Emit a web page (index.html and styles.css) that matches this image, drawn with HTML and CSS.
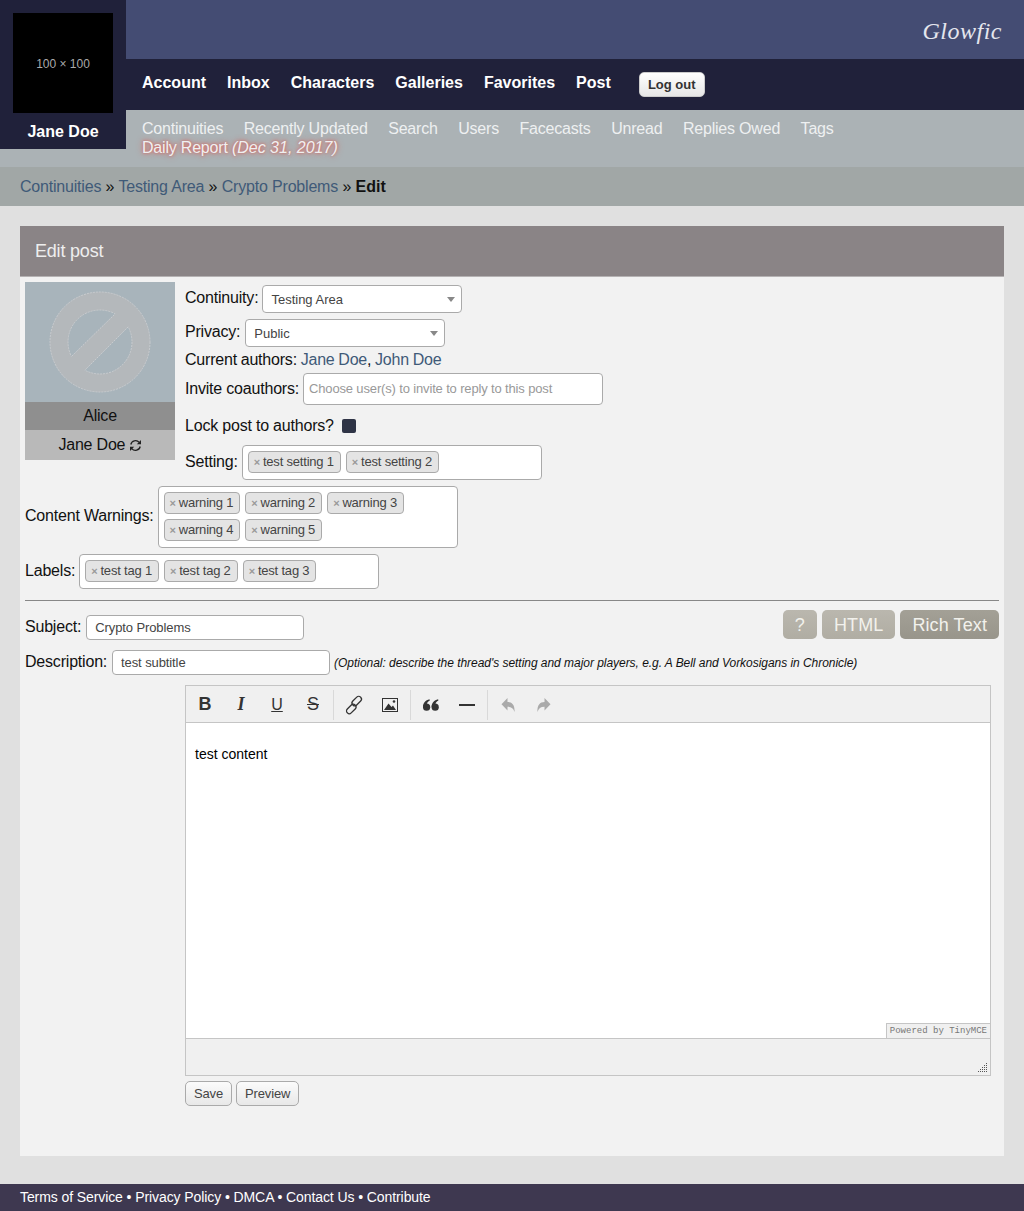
FILE: index.html
```html
<!DOCTYPE html>
<html lang="en">
<head>
    <link rel="stylesheet" href="styles.css">
    <meta charset="UTF-8">
    <title>Edit post | Glowfic</title>
</head>
<body>
    <header>
        <div class="user-box">
            <div class="user-icon">100 × 100</div>
            <div class="user-name">Jane Doe</div>
        </div>
        <div class="logo-bar"><span class="logo">Glowfic</span></div>
        <nav class="main-nav">
            <a href="#">Account</a>
            <a href="#">Inbox</a>
            <a href="#">Characters</a>
            <a href="#">Galleries</a>
            <a href="#">Favorites</a>
            <a href="#">Post</a>
            <button class="logout-button">Log out</button>
        </nav>
        <nav class="sub-nav">
            <div class="sub-links">
                <a href="#">Continuities</a>
                <a href="#">Recently Updated</a>
                <a href="#">Search</a>
                <a href="#">Users</a>
                <a href="#">Facecasts</a>
                <a href="#">Unread</a>
                <a href="#">Replies Owed</a>
                <a href="#">Tags</a>
            </div>
            <a href="#" class="daily-report">Daily Report <em>(Dec 31, 2017)</em></a>
        </nav>
    </header>

    <div class="breadcrumbs">
        <a href="#">Continuities</a> » <a href="#">Testing Area</a> » <a href="#">Crypto Problems</a> » <b>Edit</b>
    </div>

    <main>
        <h2 class="panel-title">Edit post</h2>
        <form class="panel">
            <div class="post-top">
                <div class="character-box">
                    <div class="character-icon">
                        <svg width="150" height="120" viewBox="0 0 150 120">
                            <circle cx="75" cy="60" r="41" fill="none" stroke="#b4b8bb" stroke-width="18"/>
                            <circle cx="75" cy="60" r="32" fill="none" stroke="#c9cccf" stroke-width="1" stroke-dasharray="2 1"/>
                            <path d="M41 80 L96 26 L109 39 L54 94 Z" fill="#b4b8bb"/>
                            <circle cx="75" cy="60" r="50" fill="none" stroke="#c9cccf" stroke-width="1" stroke-dasharray="2 1"/>
                            <path d="M47 74 L90 32 M103 45 L60 88" stroke="#c9cccf" stroke-width="1" stroke-dasharray="2 1"/>
                        </svg>
                    </div>
                    <div class="character-name">Alice</div>
                    <div class="character-user">
                        Jane Doe
                        <svg class="swap-icon" width="13" height="13" viewBox="0 0 13 13">
                            <path d="M1.8 5.5 A4.8 4.8 0 0 1 10.2 3.4 M11.2 7.5 A4.8 4.8 0 0 1 2.8 9.6" fill="none" stroke="#222" stroke-width="1.3"/>
                            <path d="M12 1 V5.2 H7.8 Z M1 12 V7.8 H5.2 Z" fill="#222"/>
                        </svg>
                    </div>
                </div>

                <div class="post-fields">
                    <div class="field field-select">
                        <label class="field-label">Continuity:</label>
                        <span class="select-box">Testing Area</span>
                    </div>
                    <div class="field field-select">
                        <label class="field-label">Privacy:</label>
                        <span class="select-box">Public</span>
                    </div>
                    <div class="authors">Current authors: <a href="#">Jane Doe</a>, <a href="#">John Doe</a></div>
                    <div class="field field-invite">
                        <label class="field-label">Invite coauthors:</label>
                        <span class="invite-box">Choose user(s) to invite to reply to this post</span>
                    </div>
                    <div class="field field-lock">
                        <label>Lock post to authors?</label>
                        <span class="lock-check"></span>
                    </div>
                    <div class="field">
                        <label class="field-label">Setting:</label>
                        <div class="tag-box">
                            <span class="tag">test setting 1</span>
                            <span class="tag">test setting 2</span>
                        </div>
                    </div>
                </div>
            </div>

            <div class="field field-warnings">
                <label class="field-label">Content Warnings:</label>
                <div class="tag-box">
                    <span class="tag">warning 1</span>
                    <span class="tag">warning 2</span>
                    <span class="tag">warning 3</span>
                    <span class="tag">warning 4</span>
                    <span class="tag">warning 5</span>
                </div>
            </div>
            <div class="field field-labels">
                <label class="field-label">Labels:</label>
                <div class="tag-box">
                    <span class="tag">test tag 1</span>
                    <span class="tag">test tag 2</span>
                    <span class="tag">test tag 3</span>
                </div>
            </div>

            <hr class="divider">

            <div class="subject-row">
                <div class="field">
                    <label class="field-label">Subject:</label>
                    <input type="text" class="text-input" value="Crypto Problems">
                </div>
                <div class="editor-modes">
                    <span class="mode-button mode-help">?</span>
                    <span class="mode-button">HTML</span>
                    <span class="mode-button mode-active">Rich Text</span>
                </div>
            </div>
            <div class="field field-description">
                <label class="field-label">Description:</label>
                <input type="text" class="text-input" value="test subtitle">
                <span class="hint">(Optional: describe the thread's setting and major players, e.g. A Bell and Vorkosigans in Chronicle)</span>
            </div>

            <div class="editor">
                <div class="toolbar">
                    <div class="tool-group">
                        <span class="tool tool-bold">B</span>
                        <span class="tool tool-italic">I</span>
                        <span class="tool tool-underline">U</span>
                        <span class="tool tool-strike">S</span>
                    </div>
                    <div class="tool-group">
                        <span class="tool">
                            <svg width="20" height="20" viewBox="0 0 20 20" fill="none" stroke="#333" stroke-width="1.3">
                                <rect x="10" y="0.5" width="5.5" height="11" rx="2.7" transform="rotate(45 12.7 6)"/>
                                <rect x="4.5" y="8.5" width="5.5" height="11" rx="2.7" transform="rotate(45 7.3 14)"/>
                            </svg>
                        </span>
                        <span class="tool">
                            <svg width="16" height="14" viewBox="0 0 16 14">
                                <rect x="0.5" y="0.5" width="15" height="13" fill="none" stroke="#333"/>
                                <path d="M2 12 L6.5 5.5 L9.5 9 L11 7.5 L14 12 Z" fill="#333"/>
                                <circle cx="12" cy="3.5" r="1.3" fill="#333"/>
                            </svg>
                        </span>
                    </div>
                    <div class="tool-group">
                        <span class="tool">
                            <svg width="16" height="12" viewBox="0 0 16 12" fill="#333">
                                <circle cx="3.6" cy="8.2" r="3.6"/>
                                <path d="M0 8 C0 4 2.5 1 6.5 0.2 L6.8 1.6 C4.5 2.6 3.4 4.5 3.6 7 Z"/>
                                <circle cx="12.2" cy="8.2" r="3.6"/>
                                <path d="M8.6 8 C8.6 4 11.1 1 15.1 0.2 L15.4 1.6 C13.1 2.6 12 4.5 12.2 7 Z"/>
                            </svg>
                        </span>
                        <span class="tool"><span class="tool-rule"></span></span>
                    </div>
                    <div class="tool-group tool-group-last">
                        <span class="tool">
                            <svg width="14" height="16" viewBox="0 0 14 16" fill="#aaa">
                                <path d="M6.5 1 V5 C11 5 14 8 13.5 15 C12.5 11.5 10.5 9.8 6.5 9.8 V13.5 L0.5 7.2 Z"/>
                            </svg>
                        </span>
                        <span class="tool">
                            <svg width="14" height="16" viewBox="0 0 14 16" fill="#aaa">
                                <path d="M7.5 1 V5 C3 5 0 8 0.5 15 C1.5 11.5 3.5 9.8 7.5 9.8 V13.5 L13.5 7.2 Z"/>
                            </svg>
                        </span>
                    </div>
                </div>
                <div class="editor-body">
                    <p>test content</p>
                    <span class="powered-by">Powered by TinyMCE</span>
                </div>
                <div class="status-bar">
                    <svg class="resize-grip" width="10" height="10" viewBox="0 0 10 10" fill="#555">
                        <path d="M8 0h1v1H8zM6 2h1v1H6zM8 2h1v1H8zM4 4h1v1H4zM6 4h1v1H6zM8 4h1v1H8zM2 6h1v1H2zM4 6h1v1H4zM6 6h1v1H6zM8 6h1v1H8zM0 8h1v1H0zM2 8h1v1H2zM4 8h1v1H4zM6 8h1v1H6zM8 8h1v1H8z"/>
                    </svg>
                </div>
            </div>

            <div class="form-buttons">
                <button type="button" class="plain-button">Save</button>
                <button type="button" class="plain-button">Preview</button>
            </div>
        </form>
    </main>

    <footer>
        <a href="#">Terms of Service</a> • <a href="#">Privacy Policy</a> • <a href="#">DMCA</a> • <a href="#">Contact Us</a> • <a href="#">Contribute</a>
    </footer>
</body>
</html>
```

FILE: styles.css
```css
body {
    font-family: 'Liberation Sans', Arial, sans-serif;
    font-size: 16px;
    letter-spacing: -0.2px; /* body text runs a bit tighter */
    margin: 0;
    background-color: #e0e0e0;
    color: #111;
}

a {
    text-decoration: none;
    color: #3f5a78;
}

/* Header */
header {
    position: relative;
}

.user-box {
    position: absolute;
    left: 0;
    top: 0;
    width: 126px;
    height: 149px;
    background-color: #20213a;
}

.user-icon {
    width: 100px;
    height: 100px;
    margin: 13px 13px 0;
    background-color: #000;
    color: #aaa;
    font-size: 12px;
    letter-spacing: 0;
    line-height: 102px;
    text-align: center;
}

.user-name {
    color: #fff;
    font-weight: bold;
    letter-spacing: 0;
    text-align: center;
    margin-top: 9px;
    line-height: 19px;
}

.logo-bar {
    box-sizing: border-box;
    height: 59px;
    padding: 3px 22px 0 0;
    background-color: #444c73;
    display: flex;
    justify-content: flex-end;
    align-items: center;
}

.logo {
    font-family: 'Liberation Serif', serif;
    font-style: italic;
    font-size: 24px;
    letter-spacing: 0.5px;
    color: #e4e6ee;
}

.main-nav {
    height: 51px;
    background-color: #20213a;
    padding-left: 142px;
    display: flex;
    align-items: center;
    gap: 21px;
}

.main-nav a {
    color: #fff;
    font-weight: bold;
    letter-spacing: 0;
    margin-top: -3px;
}

.logout-button {
    margin-left: 7px;
    width: 66px;
    height: 25px;
    padding: 0;
    border: 1px solid #ccc;
    border-radius: 5px;
    background: linear-gradient(#fff, #e6e6e6);
    color: #333;
    font-family: inherit;
    font-size: 13px;
    font-weight: bold;
}

.sub-nav {
    height: 48px;
    padding: 9px 0 0 142px;
    background-color: #abb2b5;
    line-height: 19px;
}

.sub-links {
    display: flex;
    gap: 20.5px;
}

.sub-nav a {
    color: #eef0f1;
}

.sub-nav .daily-report {
    text-shadow: 0 0 6px #d9625a, 0 0 3px #d9625a;
}

.daily-report em {
    letter-spacing: 0;
}

.breadcrumbs {
    height: 39px;
    line-height: 39px;
    padding-left: 20px;
    background-color: #a1a7a6;
    word-spacing: 0.15px;
}

.breadcrumbs b {
    letter-spacing: 0;
}

/* Main panel */
main {
    margin: 20px 20px 28px;
}

.panel-title {
    margin: 0;
    height: 50px;
    padding-left: 15px;
    line-height: 50px;
    font-size: 18px;
    font-weight: normal;
    color: #eee;
    background-color: #8a8486;
    border-bottom: 1px solid #b5b2b3;
}

.panel {
    padding: 5px 5px 50px;
    background-color: #f2f2f2;
}

.post-top {
    display: flex;
    gap: 10px;
}

.character-box {
    width: 150px;
    height: 178px;
    text-align: center;
}

.character-icon {
    height: 120px;
    background-color: #a8b4bb;
}

.character-name {
    height: 28px;
    line-height: 28px;
    background-color: #8f8f8f;
}

.character-user {
    height: 30px;
    line-height: 30px;
    background-color: #b9b9b9;
}

.swap-icon {
    margin-left: -1px;
    vertical-align: -2px;
}

/* Form rows */
.field {
    display: flex;
    align-items: center;
    gap: 4px;
}

.field-label {
    padding-bottom: 1px;
}

.field-select .field-label,
.field-warnings .field-label {
    padding-bottom: 3px;
}

.field-select {
    margin: 3px 0 6px;
}

.field-select + .field-select {
    margin-top: 0;
    margin-bottom: 4px;
    gap: 5px;
}

.select-box {
    position: relative;
    width: 190px;
    height: 26px;
    line-height: 28px;
    padding-left: 8px;
    background-color: #fff;
    border: 1px solid #aaa;
    border-radius: 4px;
    font-size: 13px;
    letter-spacing: 0;
    color: #444;
}

.select-box::after {
    content: "";
    position: absolute;
    right: 6px;
    top: 11px;
    border-style: solid;
    border-width: 5px 4px 0;
    border-color: #888 transparent transparent;
}

.authors {
    line-height: 18px;
    word-spacing: -0.5px;
    margin-bottom: 4px;
}

.invite-box {
    width: 293px;
    height: 30px;
    padding-left: 5px;
    line-height: 30px;
    background-color: #fff;
    border: 1px solid #aaa;
    border-radius: 4px;
    font-size: 13px;
    letter-spacing: -0.15px;
    color: #999;
}

.field-lock {
    gap: 8px;
    margin: 11px 0 9px;
    height: 20px;
}

.lock-check {
    width: 14px;
    height: 14px;
    background-color: #2f3446;
    border-radius: 2px;
}

.tag-box {
    display: flex;
    flex-wrap: wrap;
    align-content: flex-start;
    gap: 5px;
    width: 288px;
    min-height: 22px;
    padding: 5px 5px 6px;
    background-color: #fff;
    border: 1px solid #aaa;
    border-radius: 4px;
}

.tag {
    height: 20px;
    padding: 0 6px 0 5px;
    line-height: 20px;
    background-color: #e4e4e4;
    border: 1px solid #aaa;
    border-radius: 4px;
    font-size: 13px;
    letter-spacing: -0.2px;
    color: #444;
    white-space: nowrap;
}

.tag::before {
    content: "×";
    color: #999;
    font-weight: bold;
    font-size: 11px;
    margin-right: 3px;
}

.field-warnings {
    margin-top: 6px;
}

.field-labels {
    margin-top: 6px;
}

.divider {
    margin: 11px 0 9px;
    border: 0;
    border-top: 1px solid #888;
}

.subject-row {
    display: flex;
    justify-content: space-between;
    align-items: flex-start;
}

.subject-row .field {
    padding-top: 5px;
    gap: 5px;
}

.text-input {
    box-sizing: border-box;
    width: 218px;
    height: 25px;
    padding: 0 8px;
    background-color: #fff;
    border: 1px solid #aaa;
    border-radius: 4px;
    font-family: inherit;
    font-size: 13px;
    letter-spacing: -0.1px;
    color: #444;
}

.editor-modes {
    display: flex;
    gap: 5px;
}

.mode-button {
    height: 29px;
    padding: 0 12px;
    line-height: 30px;
    font-size: 18px;
    letter-spacing: 0.1px;
    color: #f2f1ec;
    background: linear-gradient(#bab7ae, #b0ada3);
    border-radius: 5px;
}

.mode-active {
    background: linear-gradient(#a3a096, #98958b);
}

.field-description {
    margin-top: 10px;
    gap: 5px;
}

.hint {
    margin-left: -1px;
    font-size: 12px;
    font-style: italic;
    letter-spacing: -0.04px;
}

/* Rich text editor */
.editor {
    box-sizing: border-box;
    width: 806px;
    margin: 10px 0 0 160px;
    border: 1px solid #c5c5c5;
}

.toolbar {
    display: flex;
    height: 35px;
    padding: 1px 0 0 1px;
    background-color: #f0f0f0;
    border-bottom: 1px solid #c5c5c5;
    align-items: center;
}

.tool-group {
    display: flex;
    height: 30px;
    padding-right: 2px;
    margin-right: 2px;
    border-right: 1px solid #d9d9d9;
}

.tool-group-last {
    border-right: 0;
}

.tool {
    width: 36px;
    height: 30px;
    display: flex;
    align-items: center;
    justify-content: center;
    font-size: 18px;
    letter-spacing: 0;
    color: #333;
}

.tool-bold {
    font-weight: bold;
}

.tool-italic {
    font-family: 'Liberation Serif', serif;
    font-style: italic;
    font-weight: bold;
}

.tool-underline {
    text-decoration: underline;
    font-size: 16px;
}

.tool-strike {
    text-decoration: line-through;
}

.tool-rule {
    width: 16px;
    height: 2px;
    background-color: #333;
}

.editor-body {
    position: relative;
    height: 315px;
    background-color: #fff;
}

.editor-body p {
    margin: 0;
    padding: 23px 0 0 9px;
    font-size: 14px;
    letter-spacing: 0;
    line-height: 17px;
    color: #000;
}

.powered-by {
    position: absolute;
    right: 0;
    bottom: 0;
    padding: 0 3px;
    height: 14px;
    line-height: 14px;
    background-color: #f0f0f0;
    border: 1px solid #c5c5c5;
    border-width: 1px 0 0 1px;
    font-family: 'Liberation Mono', monospace;
    font-size: 9px;
    letter-spacing: 0;
    color: #777;
}

.status-bar {
    position: relative;
    height: 36px;
    background-color: #f0f0f0;
    border-top: 1px solid #c5c5c5;
}

.resize-grip {
    position: absolute;
    right: 2px;
    bottom: 2px;
}

.form-buttons {
    display: flex;
    gap: 4px;
    margin: 5px 0 0 160px;
}

.plain-button {
    height: 25px;
    padding: 0 8px;
    border: 1px solid #aaa;
    border-radius: 5px;
    background: linear-gradient(#fbfbfb, #e8e8e8);
    color: #444;
    font-family: inherit;
    font-size: 13px;
    letter-spacing: -0.15px;
}

footer {
    height: 27px;
    line-height: 27px;
    padding-left: 20px;
    background-color: #3e3850;
    color: #fff;
    font-size: 14px;
    letter-spacing: -0.09px;
}

footer a {
    color: #fff;
}
```
